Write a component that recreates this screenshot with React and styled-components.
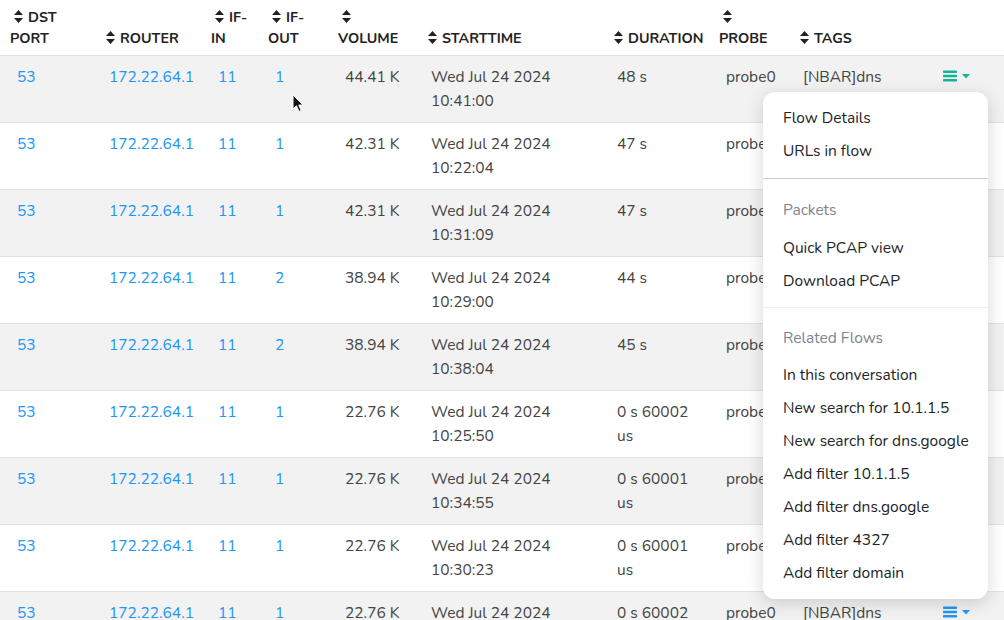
import React from "react";
import styled, { createGlobalStyle } from "styled-components";

const GlobalStyle = createGlobalStyle`
  html, body {
    margin: 0;
    padding: 0;
    background: #ffffff;
    overflow: hidden;
  }
  body {
    font-family: "Nunito", Lato, "Noto Sans", sans-serif;
    font-size: 15.5px;
    color: #444;
  }
`;

const columns = [
  { key: "port", width: 92, head: ["DST", "PORT"] },
  { key: "router", width: 109, head: ["ROUTER"] },
  { key: "ifIn", width: 57, head: ["IF-", "IN"] },
  { key: "ifOut", width: 70, head: ["IF-", "OUT"] },
  { key: "volume", width: 86, head: ["", "VOLUME"] },
  { key: "start", width: 186, head: ["STARTTIME"] },
  { key: "duration", width: 109, head: ["DURATION"] },
  { key: "probe", width: 77, head: ["", "PROBE"] },
  { key: "tags", width: 140, head: ["TAGS"] },
  { key: "action", width: 78, head: null },
];

const rows = [
  { ifOut: 1, volume: "44.41 K", time: "10:41:00", duration: "48 s", active: true },
  { ifOut: 1, volume: "42.31 K", time: "10:22:04", duration: "47 s" },
  { ifOut: 1, volume: "42.31 K", time: "10:31:09", duration: "47 s" },
  { ifOut: 2, volume: "38.94 K", time: "10:29:00", duration: "44 s" },
  { ifOut: 2, volume: "38.94 K", time: "10:38:04", duration: "45 s" },
  { ifOut: 1, volume: "22.76 K", time: "10:25:50", duration: "0 s 60002 us" },
  { ifOut: 1, volume: "22.76 K", time: "10:34:55", duration: "0 s 60001 us" },
  { ifOut: 1, volume: "22.76 K", time: "10:30:23", duration: "0 s 60001 us" },
  { ifOut: 1, volume: "22.76 K", time: "10:27:41", duration: "0 s 60002 us" },
];

const Page = styled.div`
  position: relative;
  width: 1004px;
  height: 620px;
  overflow: hidden;
`;

const Table = styled.table`
  width: 1004px;
  border-collapse: collapse;
  table-layout: fixed;
`;

const HeadCell = styled.th`
  text-align: left;
  vertical-align: bottom;
  padding: 7px 6px 6px 10px;
  font-size: 14.3px;
  font-weight: 700;
  line-height: 21px;
  color: #222;
  text-transform: uppercase;
  border-bottom: 1px solid #e2e2e2;
  white-space: nowrap;
`;

const Row = styled.tr`
  background: ${(p) => (p.$striped ? "#f2f2f2" : "#ffffff")};
  border-bottom: 1px solid #e2e2e2;
`;

const Cell = styled.td`
  vertical-align: top;
  padding: 9px 6px 9px 17px;
  line-height: 24px;
  color: #444;
`;

const Link = styled.a`
  color: #2196f3;
  text-decoration: none;
`;

const Wrap = styled.span`
  display: block;
  max-width: ${(p) => p.$max}px;
`;

const SortIcon = styled.svg`
  width: 9px;
  height: 13px;
  margin: 0 5px 0 4px;
  vertical-align: -1px;
`;

const ActionButton = styled.span`
  display: inline-flex;
  align-items: center;
  gap: 5px;
  color: ${(p) => (p.$active ? "#13b393" : "#2196f3")};
`;

const Menu = styled.div`
  position: absolute;
  top: 92px;
  right: 16px;
  width: 225px;
  padding: 9px 0 10px;
  background: #ffffff;
  border-radius: 12px;
  box-shadow: 0 4px 18px rgba(0, 0, 0, 0.16);
`;

const MenuItem = styled.div`
  padding: 6.5px 20px;
  line-height: 20px;
  font-size: 15.5px;
  color: #212529;
  white-space: nowrap;
`;

const MenuHeader = styled.div`
  padding: 10px 20px ${(p) => p.$bottom || 11}px;
  line-height: 20px;
  font-size: 15.5px;
  color: #7d8590;
`;

const Divider = styled.div`
  height: 1px;
  background: ${(p) => (p.$faint ? "#efefef" : "#cfcfcf")};
  margin: ${(p) => (p.$faint ? "10px 0 10px" : "11px 0 11px")};
`;

const Cursor = styled.svg`
  position: absolute;
  left: 292px;
  top: 94px;
  width: 12px;
  height: 19px;
`;

function Sort() {
  return (
    <SortIcon viewBox="0 0 9 13">
      <path d="M4.5 0 L9 5 H0 Z M0 8 H9 L4.5 13 Z" fill="#222" />
    </SortIcon>
  );
}

function Bars() {
  return (
    <svg width="14" height="12" viewBox="0 0 14 12">
      <rect x="0" y="0.5" width="14" height="2.4" rx="0.6" fill="currentColor" />
      <rect x="0" y="4.8" width="14" height="2.4" rx="0.6" fill="currentColor" />
      <rect x="0" y="9.1" width="14" height="2.4" rx="0.6" fill="currentColor" />
    </svg>
  );
}

function Caret() {
  return (
    <svg width="8" height="5" viewBox="0 0 8 5">
      <path d="M0 0 H8 L4 4.5 Z" fill="currentColor" />
    </svg>
  );
}

function Header({ lines }) {
  if (!lines) return <HeadCell />;
  return (
    <HeadCell>
      <Sort />
      {lines[0]}
      {lines[1] !== undefined && (
        <>
          <br />
          {lines[1]}
        </>
      )}
    </HeadCell>
  );
}

export default function App() {
  return (
    <>
      <GlobalStyle />
      <Page>
        <Table>
          <colgroup>
            {columns.map((c) => (
              <col key={c.key} style={{ width: c.width }} />
            ))}
          </colgroup>
          <thead>
            <tr>
              {columns.map((c) => (
                <Header key={c.key} lines={c.head} />
              ))}
            </tr>
          </thead>
          <tbody>
            {rows.map((r, i) => (
              <Row key={i} $striped={i % 2 === 0}>
                <Cell>
                  <Link>53</Link>
                </Cell>
                <Cell>
                  <Link>172.22.64.1</Link>
                </Cell>
                <Cell>
                  <Link>11</Link>
                </Cell>
                <Cell>
                  <Link>{r.ifOut}</Link>
                </Cell>
                <Cell>{r.volume}</Cell>
                <Cell>
                  Wed Jul 24 2024
                  <br />
                  {r.time}
                </Cell>
                <Cell>
                  <Wrap $max={80}>{r.duration}</Wrap>
                </Cell>
                <Cell>probe0</Cell>
                <Cell>[NBAR]dns</Cell>
                <Cell>
                  <ActionButton $active={r.active}>
                    <Bars />
                    <Caret />
                  </ActionButton>
                </Cell>
              </Row>
            ))}
          </tbody>
        </Table>

        <Cursor viewBox="0 0 12 19">
          <path
            d="M1 1 L1 15 L4.5 11.8 L7 17.5 L9.2 16.5 L6.8 11 L11 11 Z"
            fill="#111"
            stroke="#fff"
            strokeWidth="1"
          />
        </Cursor>

        <Menu>
          <MenuItem>Flow Details</MenuItem>
          <MenuItem>URLs in flow</MenuItem>
          <Divider />
          <MenuHeader>Packets</MenuHeader>
          <MenuItem>Quick PCAP view</MenuItem>
          <MenuItem>Download PCAP</MenuItem>
          <Divider $faint />
          <MenuHeader $bottom={10}>Related Flows</MenuHeader>
          <MenuItem>In this conversation</MenuItem>
          <MenuItem>New search for 10.1.1.5</MenuItem>
          <MenuItem>New search for dns.google</MenuItem>
          <MenuItem>Add filter 10.1.1.5</MenuItem>
          <MenuItem>Add filter dns.google</MenuItem>
          <MenuItem>Add filter 4327</MenuItem>
          <MenuItem>Add filter domain</MenuItem>
        </Menu>
      </Page>
    </>
  );
}
